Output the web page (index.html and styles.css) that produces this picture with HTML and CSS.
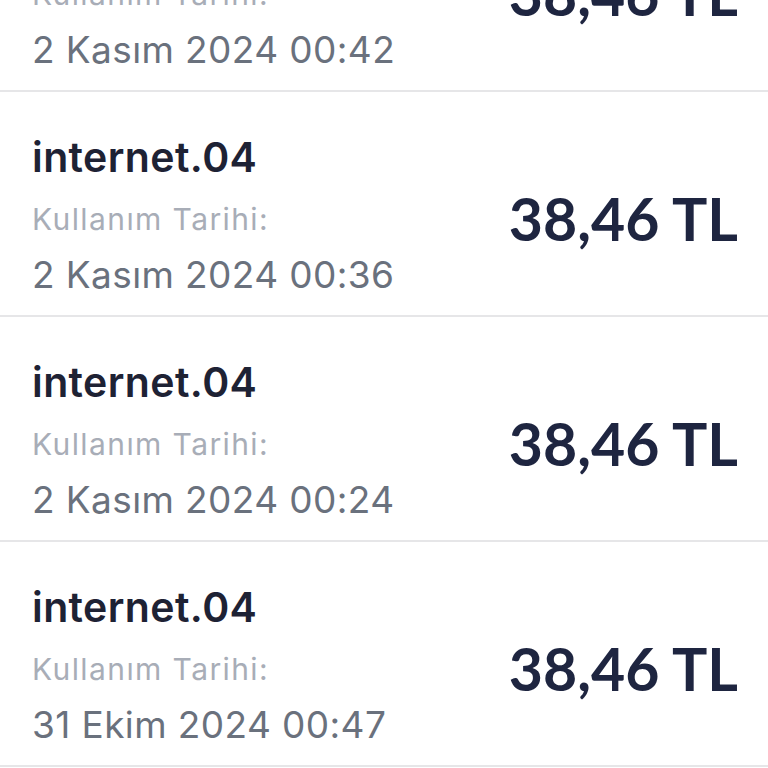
FILE: index.html
```html
<!DOCTYPE html>
<html lang="tr">
<head>
<meta charset="utf-8">
<link rel="stylesheet" href="styles.css">
</head>
<body>
<ul class="list">
  <li class="row">
    <div class="info">
      <div class="title">internet.04</div>
      <div class="label">Kullanım Tarihi:</div>
      <div class="date">2 Kasım 2024 00:42</div>
    </div>
    <div class="amount">38,46 TL</div>
  </li>
  <li class="row">
    <div class="info">
      <div class="title">internet.04</div>
      <div class="label">Kullanım Tarihi:</div>
      <div class="date">2 Kasım 2024 00:36</div>
    </div>
    <div class="amount">38,46 TL</div>
  </li>
  <li class="row">
    <div class="info">
      <div class="title">internet.04</div>
      <div class="label">Kullanım Tarihi:</div>
      <div class="date">2 Kasım 2024 00:24</div>
    </div>
    <div class="amount">38,46 TL</div>
  </li>
  <li class="row">
    <div class="info">
      <div class="title">internet.04</div>
      <div class="label">Kullanım Tarihi:</div>
      <div class="date">31 Ekim 2024 00:47</div>
    </div>
    <div class="amount">38,46 TL</div>
  </li>
</ul>
</body>
</html>
```
FILE: styles.css
```css
html, body {
  margin: 0;
  padding: 0;
  background: #ffffff;
  overflow: hidden;
}
body {
  font-family: "Inter", "Noto Sans", sans-serif;
}
.list {
  list-style: none;
  margin: -133px 0 0 0;
  padding: 0;
}
.row {
  height: 223px;
  border-bottom: 2px solid #e6e6e8;
  box-sizing: content-box;
  display: flex;
  align-items: center;
  justify-content: space-between;
  padding: 0 30px 0 32px;
}
.info {
  display: flex;
  flex-direction: column;
  padding-top: 23px;
}
.title {
  font-size: 41px;
  font-weight: 600;
  color: #1e2234;
  line-height: 48px;
  letter-spacing: 0.4px;
}
.label {
  font-size: 30px;
  color: #a8adb7;
  line-height: 40px;
  letter-spacing: 1.4px;
  margin-top: 18px;
}
.date {
  font-size: 37px;
  color: #6a717d;
  line-height: 46px;
  letter-spacing: 0.4px;
  margin-top: 13px;
}
.amount {
  font-family: "Lato", "Noto Sans", sans-serif;
  font-size: 59px;
  font-weight: 700;
  color: #1e2540;
  line-height: 70px;
  padding-top: 30px;
}
```
